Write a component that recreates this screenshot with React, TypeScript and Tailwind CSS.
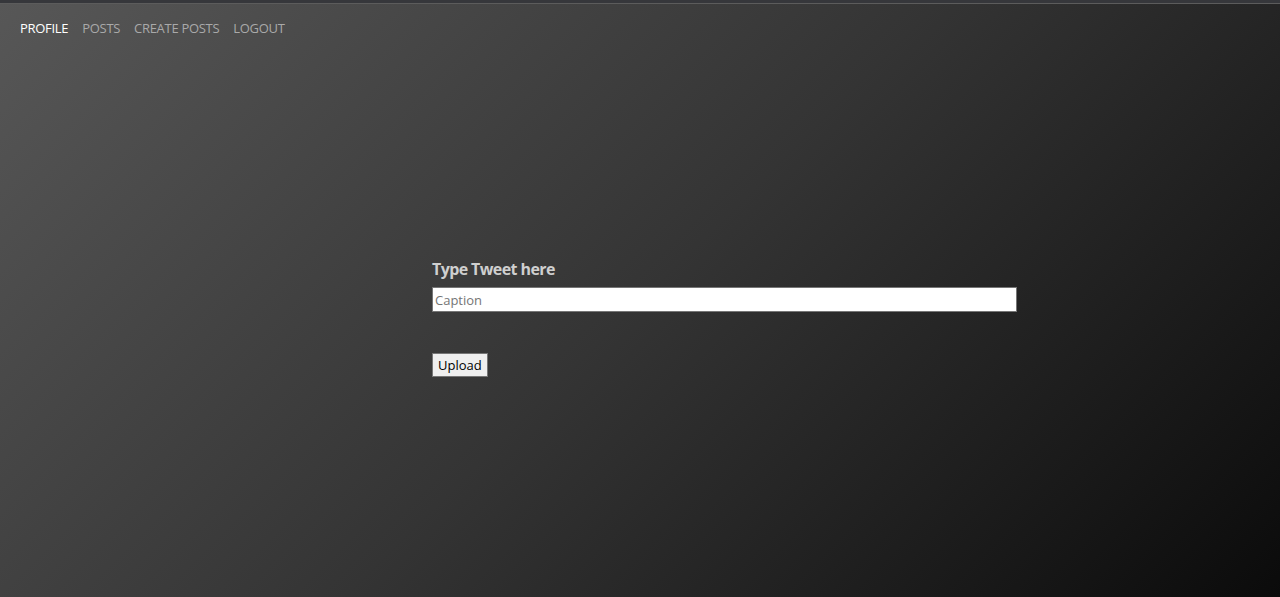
export default function App() {
  return (
    <div className="h-[597px] w-[1280px] flex flex-col overflow-hidden font-['Open_Sans','Noto_Sans',sans-serif]">
      <div className="h-[4px] bg-[#36373b] border-b border-[#5c5c5c] shrink-0" />
      <div className="flex-1 bg-[linear-gradient(135deg,#575757_0%,#343434_50%,#0b0b0b_100%)] flex flex-col">
        <nav className="flex gap-[14px] pl-[20px] pt-[15px] text-[13px] leading-[18px] tracking-[-0.3px]">
          <span className="text-white">PROFILE</span>
          <span className="text-[#a9a9a9]">POSTS</span>
          <span className="text-[#a9a9a9]">CREATE POSTS</span>
          <span className="text-[#a9a9a9]">LOGOUT</span>
        </nav>
        <div className="pl-[432px] pt-[221px] flex flex-col items-start">
          <h2 className="text-[16px] font-bold text-[#cfcfcf] leading-[22px] tracking-[-0.6px]">Type Tweet here</h2>
          <input
            placeholder="Caption"
            className="mt-[7px] w-[585px] h-[25px] bg-white border border-[#767676] px-[2px] text-[13px] text-black placeholder:text-[#757575] outline-none"
          />
          <button className="mt-[41px] h-[24px] px-[5px] bg-[#efefef] border border-[#767676] text-[13px] text-black leading-none">
            Upload
          </button>
        </div>
      </div>
    </div>
  );
}
